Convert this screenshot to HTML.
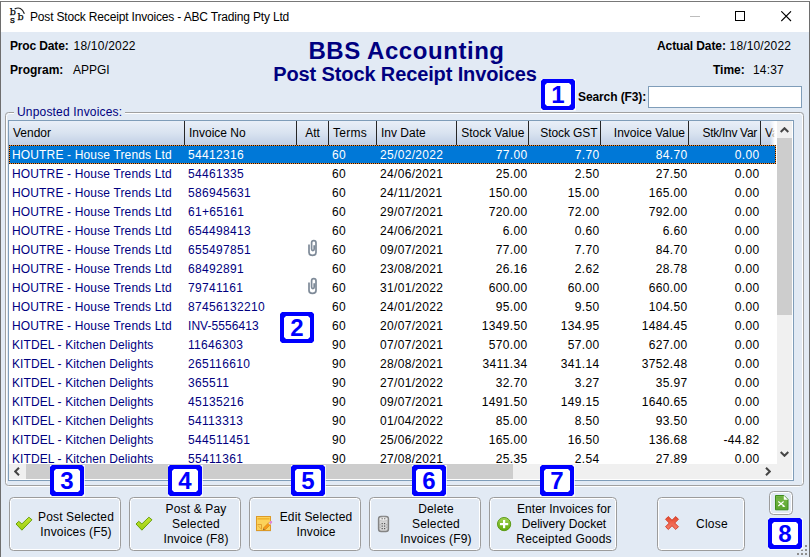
<!DOCTYPE html>
<html><head><meta charset="utf-8"><title>Post Stock Receipt Invoices</title>
<style>
*{box-sizing:border-box;margin:0;padding:0}
html,body{width:810px;height:557px;overflow:hidden}
body{background:#e2eaf4;font-family:"Liberation Sans",sans-serif;font-size:12px;color:#000;position:relative}
.abs{position:absolute}
#top0{position:absolute;left:0;top:0;width:810px;height:1px;background:#fff}
#win{position:absolute;left:0;top:1px;width:810px;height:556px;border-left:1px solid #6e6e6e;border-top:1px solid #787878;border-right:1px solid #6e6e6e}
#title{position:absolute;left:1px;top:2px;width:808px;height:30px;background:#fff}
#title .cap{position:absolute;left:29px;top:7px;font-size:12px;line-height:16px;letter-spacing:-0.17px;color:#000;white-space:nowrap}
.ico text{font-family:"DejaVu Serif",serif;font-weight:normal;fill:#000;stroke:#000;stroke-width:0.25px}
.lbl{position:absolute;font-size:12px;line-height:14px;white-space:nowrap}
.b{font-weight:bold}
#h1{position:absolute;left:1.5px;width:810px;text-align:center;top:37px;font-size:24px;line-height:28px;letter-spacing:0.55px;font-weight:bold;color:#000080}
#h2{position:absolute;left:0;width:810px;text-align:center;top:63px;font-size:20px;line-height:22px;letter-spacing:-0.12px;font-weight:bold;color:#000080}
#search{position:absolute;left:648px;top:86px;width:154px;height:22px;background:#fff;border:1px solid #7f9db9}
#grpw{position:absolute;left:6px;top:113px;width:797px;height:374px;border:1px solid #fff;border-radius:3.5px}
#grp{position:absolute;left:5px;top:112px;width:799px;height:374px;border:1px solid #a0a0a0;border-radius:3.5px}
#grplbl{position:absolute;left:14px;top:105px;letter-spacing:0.18px;padding:0 3px;background:#e2eaf4;color:#000080;font-size:12px;line-height:14px}
#tbl{position:absolute;left:8px;top:120px;width:786px;height:361px;border:1px solid #7f9db9;background:#fff;overflow:hidden}
#hdr{position:absolute;left:0;top:0;width:766px;height:24px;background:linear-gradient(#e9eff8,#d9e3f0 50%,#c1cfe5)}
.th{position:absolute;top:121px;height:24px;padding-top:1px;line-height:23px;font-size:12px;padding-left:4px;border-right:1px solid #262626;white-space:nowrap;overflow:hidden}
.th.r{text-align:right;padding-right:3px;padding-left:0}
.th.c{text-align:center;padding-left:0}
#fade{position:absolute;left:770px;top:121px;width:7px;height:24px;background:linear-gradient(90deg,rgba(255,255,255,0),#fff 70%)}
#rows{position:absolute;left:9px;top:145px;width:767px;height:318px;overflow:hidden}
.row{position:absolute;left:0;width:767px;height:19px;color:#000}
.td.n{color:#000080}
.sel .td.n{color:#fff}
.row.sel{color:#fff;background:repeating-linear-gradient(90deg,#111 0 1px,#ff8c2a 1px 2px) 0 0/100% 1px no-repeat,repeating-linear-gradient(90deg,#111 0 1px,#ff8c2a 1px 2px) 0 100%/100% 1px no-repeat,repeating-linear-gradient(180deg,#111 0 1px,#ff8c2a 1px 2px) 0 0/1px 100% no-repeat,repeating-linear-gradient(180deg,#111 0 1px,#ff8c2a 1px 2px) 100% 0/1px 100% no-repeat,#0078d7}
.td{position:absolute;top:1px;height:18px;line-height:18px;font-size:12px;padding-left:3px;letter-spacing:0.33px;white-space:nowrap;overflow:hidden}
.td.v{letter-spacing:0.15px}
.td.r{text-align:right;padding-right:1.6px;padding-left:0}
.clip{position:absolute}
#vs{position:absolute;left:777px;top:121px;width:15px;height:343px;background:#f0f0f0}
#vthumb{position:absolute;left:0;top:17px;width:15px;height:177px;background:#cdcdcd}
#hs{position:absolute;left:9px;top:464px;width:768px;height:15px;background:#f0f0f0}
#hthumb{position:absolute;left:17px;top:0;width:487px;height:15px;background:#cdcdcd}
#corner{position:absolute;left:777px;top:464px;width:15px;height:15px;background:#f0f0f0}
.btn{position:absolute;top:497px;height:54px;border:1px solid #9c9c9c;border-radius:4.5px;box-shadow:inset 0 0 0 1px #fff;background:#e2eaf4;font-size:12px;line-height:15px;text-align:center}
.btn .t{position:absolute;white-space:nowrap;text-align:center;letter-spacing:0.15px}
.badge{position:absolute}
.badge text{font-family:"Liberation Sans",sans-serif;font-weight:bold;font-size:24px;fill:#0000ff}
</style></head><body>
<div id="top0"></div><div id="win"></div>
<div id="title">
<svg class="abs ico" style="left:7px;top:4px" width="20" height="20" viewBox="0 0 20 20"><text x="1.8" y="9.1" font-size="9.6">b</text><text x="9.4" y="13.7" font-size="9.6">b</text><text x="2" y="16.6" font-size="9.6">s</text><path d="M6.7 2.9 Q13.2 -0.3 16.4 7.8" fill="none" stroke="#222" stroke-width="1.2"/></svg>
<div class="cap">Post Stock Receipt Invoices - ABC Trading Pty Ltd</div>
<svg class="abs" style="left:689px;top:14px" width="12" height="2"><rect width="10" height="1" fill="#bdbdbd"/></svg>
<svg class="abs" style="left:734px;top:9px" width="11" height="11"><rect x="0.5" y="0.5" width="9" height="9" fill="none" stroke="#000" stroke-width="1"/></svg>
<svg class="abs" style="left:780px;top:9px" width="11" height="11"><path d="M0.3 0.3 L10 10 M10 0.3 L0.3 10" stroke="#000" stroke-width="1.1" fill="none"/></svg>
</div>

<div class="lbl b" style="left:10px;top:39px;letter-spacing:-0.15px">Proc Date:</div>
<div class="lbl" style="left:73.5px;top:39px;letter-spacing:0.22px">18/10/2022</div>
<div class="lbl b" style="left:10px;top:63px">Program:</div>
<div class="lbl" style="left:73px;top:63px">APPGI</div>
<div id="h1">BBS Accounting</div>
<div id="h2">Post Stock Receipt Invoices</div>
<div class="lbl b" style="left:657px;top:39px;letter-spacing:-0.1px">Actual Date:</div>
<div class="lbl" style="left:729.6px;top:39px;letter-spacing:0.14px">18/10/2022</div>
<div class="lbl b" style="left:713px;top:63px">Time:</div>
<div class="lbl" style="left:753px;top:63px;letter-spacing:0.15px">14:37</div>
<div class="lbl b" style="left:578px;top:90px;letter-spacing:-0.1px">Search (F3):</div>
<div id="search"></div>

<div id="grpw"></div><div id="grp"></div>
<div id="grplbl">Unposted Invoices:</div>
<div id="tbl"><div id="hdr"></div></div>
<div class="th" style="left:9px;width:176px;"><span>Vendor</span></div>
<div class="th" style="left:185px;width:112px;"><span>Invoice No</span></div>
<div class="th c" style="left:297px;width:32px;"><span>Att</span></div>
<div class="th" style="left:329px;width:48px;letter-spacing:0.3px;"><span>Terms</span></div>
<div class="th" style="left:377px;width:80px;"><span>Inv Date</span></div>
<div class="th r" style="left:457px;width:72px;padding-right:3.6px;"><span>Stock Value</span></div>
<div class="th r" style="left:529px;width:72px;letter-spacing:-0.08px;padding-right:2.5px;"><span>Stock GST</span></div>
<div class="th r" style="left:601px;width:88px;"><span>Invoice Value</span></div>
<div class="th r" style="left:689px;width:72px;letter-spacing:-0.3px;"><span>Stk/Inv Var</span></div>
<div class="th" style="left:761px;width:14px;border-right:0;width:16px;"><span>Va</span></div>
<div id="fade"></div>
<div id="rows">
<div class="row sel" style="top:0px"><span class="td v n" style="left:0px;width:176px">HOUTRE - House Trends Ltd</span><span class="td n" style="left:176px;width:112px">54412316</span><span class="td" style="left:320px;width:48px">60</span><span class="td" style="left:368px;width:80px">25/02/2022</span><span class="td r" style="left:448px;width:72px">77.00</span><span class="td r" style="left:520px;width:72px">7.70</span><span class="td r" style="left:592px;width:88px">84.70</span><span class="td r" style="left:680px;width:72px">0.00</span></div>
<div class="row" style="top:19px"><span class="td v n" style="left:0px;width:176px">HOUTRE - House Trends Ltd</span><span class="td n" style="left:176px;width:112px">54461335</span><span class="td" style="left:320px;width:48px">60</span><span class="td" style="left:368px;width:80px">24/06/2021</span><span class="td r" style="left:448px;width:72px">25.00</span><span class="td r" style="left:520px;width:72px">2.50</span><span class="td r" style="left:592px;width:88px">27.50</span><span class="td r" style="left:680px;width:72px">0.00</span></div>
<div class="row" style="top:38px"><span class="td v n" style="left:0px;width:176px">HOUTRE - House Trends Ltd</span><span class="td n" style="left:176px;width:112px">586945631</span><span class="td" style="left:320px;width:48px">60</span><span class="td" style="left:368px;width:80px">24/11/2021</span><span class="td r" style="left:448px;width:72px">150.00</span><span class="td r" style="left:520px;width:72px">15.00</span><span class="td r" style="left:592px;width:88px">165.00</span><span class="td r" style="left:680px;width:72px">0.00</span></div>
<div class="row" style="top:57px"><span class="td v n" style="left:0px;width:176px">HOUTRE - House Trends Ltd</span><span class="td n" style="left:176px;width:112px">61+65161</span><span class="td" style="left:320px;width:48px">60</span><span class="td" style="left:368px;width:80px">29/07/2021</span><span class="td r" style="left:448px;width:72px">720.00</span><span class="td r" style="left:520px;width:72px">72.00</span><span class="td r" style="left:592px;width:88px">792.00</span><span class="td r" style="left:680px;width:72px">0.00</span></div>
<div class="row" style="top:76px"><span class="td v n" style="left:0px;width:176px">HOUTRE - House Trends Ltd</span><span class="td n" style="left:176px;width:112px">654498413</span><span class="td" style="left:320px;width:48px">60</span><span class="td" style="left:368px;width:80px">24/06/2021</span><span class="td r" style="left:448px;width:72px">6.00</span><span class="td r" style="left:520px;width:72px">0.60</span><span class="td r" style="left:592px;width:88px">6.60</span><span class="td r" style="left:680px;width:72px">0.00</span></div>
<div class="row" style="top:95px"><span class="td v n" style="left:0px;width:176px">HOUTRE - House Trends Ltd</span><span class="td n" style="left:176px;width:112px">655497851</span><svg class="clip" style="left:298px;top:-1px" width="11" height="18" viewBox="0 0 11 18"><path d="M2 5.5 V13.5 Q2 16.4 5.5 16.4 Q9 16.4 9 13.5 V3.8 Q9 1.6 6.8 1.6 Q4.6 1.6 4.6 3.8 V10 Q4.6 11.6 5.9 11.6 Q7.2 11.6 7.2 10 V6.2" fill="none" stroke="#7e8a98" stroke-width="1.7"/></svg><span class="td" style="left:320px;width:48px">60</span><span class="td" style="left:368px;width:80px">09/07/2021</span><span class="td r" style="left:448px;width:72px">77.00</span><span class="td r" style="left:520px;width:72px">7.70</span><span class="td r" style="left:592px;width:88px">84.70</span><span class="td r" style="left:680px;width:72px">0.00</span></div>
<div class="row" style="top:114px"><span class="td v n" style="left:0px;width:176px">HOUTRE - House Trends Ltd</span><span class="td n" style="left:176px;width:112px">68492891</span><span class="td" style="left:320px;width:48px">60</span><span class="td" style="left:368px;width:80px">23/08/2021</span><span class="td r" style="left:448px;width:72px">26.16</span><span class="td r" style="left:520px;width:72px">2.62</span><span class="td r" style="left:592px;width:88px">28.78</span><span class="td r" style="left:680px;width:72px">0.00</span></div>
<div class="row" style="top:133px"><span class="td v n" style="left:0px;width:176px">HOUTRE - House Trends Ltd</span><span class="td n" style="left:176px;width:112px">79741161</span><svg class="clip" style="left:298px;top:-1px" width="11" height="18" viewBox="0 0 11 18"><path d="M2 5.5 V13.5 Q2 16.4 5.5 16.4 Q9 16.4 9 13.5 V3.8 Q9 1.6 6.8 1.6 Q4.6 1.6 4.6 3.8 V10 Q4.6 11.6 5.9 11.6 Q7.2 11.6 7.2 10 V6.2" fill="none" stroke="#7e8a98" stroke-width="1.7"/></svg><span class="td" style="left:320px;width:48px">60</span><span class="td" style="left:368px;width:80px">31/01/2022</span><span class="td r" style="left:448px;width:72px">600.00</span><span class="td r" style="left:520px;width:72px">60.00</span><span class="td r" style="left:592px;width:88px">660.00</span><span class="td r" style="left:680px;width:72px">0.00</span></div>
<div class="row" style="top:152px"><span class="td v n" style="left:0px;width:176px">HOUTRE - House Trends Ltd</span><span class="td n" style="left:176px;width:112px">87456132210</span><span class="td" style="left:320px;width:48px">60</span><span class="td" style="left:368px;width:80px">24/01/2022</span><span class="td r" style="left:448px;width:72px">95.00</span><span class="td r" style="left:520px;width:72px">9.50</span><span class="td r" style="left:592px;width:88px">104.50</span><span class="td r" style="left:680px;width:72px">0.00</span></div>
<div class="row" style="top:171px"><span class="td v n" style="left:0px;width:176px">HOUTRE - House Trends Ltd</span><span class="td n" style="left:176px;width:112px;letter-spacing:0.05px">INV-5556413</span><span class="td" style="left:320px;width:48px">60</span><span class="td" style="left:368px;width:80px">20/07/2021</span><span class="td r" style="left:448px;width:72px">1349.50</span><span class="td r" style="left:520px;width:72px">134.95</span><span class="td r" style="left:592px;width:88px">1484.45</span><span class="td r" style="left:680px;width:72px">0.00</span></div>
<div class="row" style="top:190px"><span class="td v n" style="left:0px;width:176px;letter-spacing:0.1px">KITDEL - Kitchen Delights</span><span class="td n" style="left:176px;width:112px">11646303</span><span class="td" style="left:320px;width:48px">90</span><span class="td" style="left:368px;width:80px">07/07/2021</span><span class="td r" style="left:448px;width:72px">570.00</span><span class="td r" style="left:520px;width:72px">57.00</span><span class="td r" style="left:592px;width:88px">627.00</span><span class="td r" style="left:680px;width:72px">0.00</span></div>
<div class="row" style="top:209px"><span class="td v n" style="left:0px;width:176px;letter-spacing:0.1px">KITDEL - Kitchen Delights</span><span class="td n" style="left:176px;width:112px">265116610</span><span class="td" style="left:320px;width:48px">90</span><span class="td" style="left:368px;width:80px">28/08/2021</span><span class="td r" style="left:448px;width:72px">3411.34</span><span class="td r" style="left:520px;width:72px">341.14</span><span class="td r" style="left:592px;width:88px">3752.48</span><span class="td r" style="left:680px;width:72px">0.00</span></div>
<div class="row" style="top:228px"><span class="td v n" style="left:0px;width:176px;letter-spacing:0.1px">KITDEL - Kitchen Delights</span><span class="td n" style="left:176px;width:112px">365511</span><span class="td" style="left:320px;width:48px">90</span><span class="td" style="left:368px;width:80px">27/01/2022</span><span class="td r" style="left:448px;width:72px">32.70</span><span class="td r" style="left:520px;width:72px">3.27</span><span class="td r" style="left:592px;width:88px">35.97</span><span class="td r" style="left:680px;width:72px">0.00</span></div>
<div class="row" style="top:247px"><span class="td v n" style="left:0px;width:176px;letter-spacing:0.1px">KITDEL - Kitchen Delights</span><span class="td n" style="left:176px;width:112px">45135216</span><span class="td" style="left:320px;width:48px">90</span><span class="td" style="left:368px;width:80px">09/07/2021</span><span class="td r" style="left:448px;width:72px">1491.50</span><span class="td r" style="left:520px;width:72px">149.15</span><span class="td r" style="left:592px;width:88px">1640.65</span><span class="td r" style="left:680px;width:72px">0.00</span></div>
<div class="row" style="top:266px"><span class="td v n" style="left:0px;width:176px;letter-spacing:0.1px">KITDEL - Kitchen Delights</span><span class="td n" style="left:176px;width:112px">54113313</span><span class="td" style="left:320px;width:48px">90</span><span class="td" style="left:368px;width:80px">01/04/2022</span><span class="td r" style="left:448px;width:72px">85.00</span><span class="td r" style="left:520px;width:72px">8.50</span><span class="td r" style="left:592px;width:88px">93.50</span><span class="td r" style="left:680px;width:72px">0.00</span></div>
<div class="row" style="top:285px"><span class="td v n" style="left:0px;width:176px;letter-spacing:0.1px">KITDEL - Kitchen Delights</span><span class="td n" style="left:176px;width:112px">544511451</span><span class="td" style="left:320px;width:48px">90</span><span class="td" style="left:368px;width:80px">25/06/2022</span><span class="td r" style="left:448px;width:72px">165.00</span><span class="td r" style="left:520px;width:72px">16.50</span><span class="td r" style="left:592px;width:88px">136.68</span><span class="td r" style="left:680px;width:72px">-44.82</span></div>
<div class="row" style="top:304px"><span class="td v n" style="left:0px;width:176px;letter-spacing:0.1px">KITDEL - Kitchen Delights</span><span class="td n" style="left:176px;width:112px">55411361</span><span class="td" style="left:320px;width:48px">90</span><span class="td" style="left:368px;width:80px">27/08/2021</span><span class="td r" style="left:448px;width:72px">25.35</span><span class="td r" style="left:520px;width:72px">2.54</span><span class="td r" style="left:592px;width:88px">27.89</span><span class="td r" style="left:680px;width:72px">0.00</span></div>
</div>
<div id="vs"><div id="vthumb"></div>
<svg class="abs" style="left:3px;top:6px" width="9" height="6"><path d="M0.7 5 L4.5 1.2 L8.3 5" fill="none" stroke="#454545" stroke-width="2"/></svg>
<svg class="abs" style="left:3px;top:330px" width="9" height="6"><path d="M0.7 1 L4.5 4.8 L8.3 1" fill="none" stroke="#454545" stroke-width="2"/></svg>
</div>
<div id="hs"><div id="hthumb"></div>
<svg class="abs" style="left:5px;top:3px" width="6" height="9"><path d="M5 0.7 L1.2 4.5 L5 8.3" fill="none" stroke="#454545" stroke-width="2"/></svg>
<svg class="abs" style="left:756px;top:3px" width="6" height="9"><path d="M1 0.7 L4.8 4.5 L1 8.3" fill="none" stroke="#454545" stroke-width="2"/></svg>
</div>
<div id="corner"></div>

<div class="btn" style="left:9px;width:112px;top:497px;height:54px"><svg class="abs" style="left:4.4px;top:17px" width="20" height="18" viewBox="0 0 20 18"><defs><linearGradient id="tg1" x1="0" y1="0" x2="0" y2="1"><stop offset="0" stop-color="#c4e630"/><stop offset="1" stop-color="#98cc10"/></linearGradient></defs><path d="M2 9 L4.7 6.3 L7.9 8.9 L14.9 2.2 L18 4.8 L7.9 15.2 Z" fill="url(#tg1)" stroke="#5e9a00" stroke-width="0.9" stroke-linejoin="round"/></svg><div class="t" style="left:23px;width:86px;top:12px">Post Selected<br>Invoices (F5)</div></div>
<div class="btn" style="left:129px;width:112px;top:497px;height:54px"><svg class="abs" style="left:4.4px;top:17px" width="20" height="18" viewBox="0 0 20 18"><defs><linearGradient id="tg2" x1="0" y1="0" x2="0" y2="1"><stop offset="0" stop-color="#c4e630"/><stop offset="1" stop-color="#98cc10"/></linearGradient></defs><path d="M2 9 L4.7 6.3 L7.9 8.9 L14.9 2.2 L18 4.8 L7.9 15.2 Z" fill="url(#tg2)" stroke="#5e9a00" stroke-width="0.9" stroke-linejoin="round"/></svg><div class="t" style="left:23px;width:86px;top:4px">Post &amp; Pay<br>Selected<br>Invoice (F8)</div></div>
<div class="btn" style="left:249px;width:112px;top:497px;height:54px"><svg class="abs" style="left:5px;top:17px" width="18" height="18" viewBox="0 0 18 18"><rect x="1" y="15" width="15" height="1.2" fill="#9a9a9a" opacity=".7"/><rect x="1.5" y="1.5" width="14" height="14" fill="#fbd25a" stroke="#dc9a28" stroke-width="1"/><rect x="2.5" y="3" width="12" height="1.6" fill="#f2b42c"/><path d="M2.5 9.5 H6.5 V14.5" fill="none" stroke="#e0a030" stroke-width="1"/><path d="M3 10.5 L6 14" stroke="#e8b040" stroke-width="1"/><path d="M8.2 15 L8.8 12.6 L14.2 7.2 L16 9 L10.6 14.4 Z" fill="#f59a1a" stroke="#c87810" stroke-width=".5"/><path d="M8.2 15 L8.6 13.4 L9.8 14.6 Z" fill="#555"/><path d="M13.3 8.1 L15.1 9.9 L16 9 L14.2 7.2 Z" fill="#d8d8e8"/><path d="M14.2 7.2 L15.4 6 Q16.3 5.6 16.9 6.3 Q17.5 7 17.1 7.8 L16 9 Z" fill="#e088d8"/></svg><div class="t" style="left:23px;width:86px;top:12px">Edit Selected<br>Invoice</div></div>
<div class="btn" style="left:369px;width:112px;top:497px;height:54px"><svg class="abs" style="left:7px;top:17px" width="14" height="18" viewBox="0 0 14 18"><rect x="1.6" y="1.6" width="9.8" height="14.8" rx="2.5" fill="#d6d6d6" stroke="#848484" stroke-width="1.5"/><ellipse cx="6.5" cy="4" rx="4.2" ry="2" fill="#efefef" stroke="#b0b0b0" stroke-width=".6"/><g fill="#555"><rect x="4.6" y="3.2" width="1.1" height="1.1"/><rect x="7.2" y="3.2" width="1.1" height="1.1"/><rect x="4.6" y="8" width="1.2" height="1.2"/><rect x="7" y="8" width="1.2" height="1.2"/><rect x="4.6" y="10.5" width="1.2" height="1.2"/><rect x="7" y="10.5" width="1.2" height="1.2"/><rect x="4.6" y="13" width="1.2" height="1.2"/><rect x="7" y="13" width="1.2" height="1.2"/></g><g fill="#9a9a9a"><rect x="2.6" y="9.3" width="1" height="1"/><rect x="9.2" y="9.3" width="1" height="1"/><rect x="2.6" y="11.8" width="1" height="1"/><rect x="9.2" y="11.8" width="1" height="1"/></g></svg><div class="t" style="left:23px;width:86px;top:4px">Delete<br>Selected<br>Invoices (F9)</div></div>
<div class="btn" style="left:489px;width:128px;top:497px;height:54px"><svg class="abs" style="left:6px;top:18px" width="16" height="16" viewBox="0 0 16 16"><defs><linearGradient id="pg" x1="0" y1="0" x2="0" y2="1"><stop offset="0" stop-color="#a6d456"/><stop offset="1" stop-color="#5ea808"/></linearGradient></defs><circle cx="8.1" cy="8.1" r="6.6" fill="url(#pg)" stroke="#5a9a14" stroke-width="1"/><rect x="4" y="7" width="8.2" height="2.2" fill="#fff"/><rect x="7" y="4" width="2.2" height="8.2" fill="#fff"/></svg><div class="t" style="left:20px;width:108px;top:4px;letter-spacing:0.03px">Enter Invoices for<br>Delivery Docket<br><span style="letter-spacing:0.18px">Receipted Goods</span></div></div>
<div class="btn" style="left:657px;width:88px;top:497px;height:54px"><svg class="abs" style="left:6px;top:17px" width="18" height="18" viewBox="0 0 18 18"><defs><linearGradient id="rg" x1="0" y1="0" x2="0" y2="1"><stop offset="0" stop-color="#e2462a"/><stop offset="0.5" stop-color="#f0644e"/><stop offset="1" stop-color="#f47e6a"/></linearGradient></defs><path d="M11.75 1.57 L14.43 4.25 L10.69 8.00 L14.43 11.75 L11.75 14.43 L8.00 10.69 L4.25 14.43 L1.57 11.75 L5.31 8.00 L1.57 4.25 L4.25 1.57 L8.00 5.31 Z" fill="url(#rg)" stroke="#d4402a" stroke-width="1" stroke-linejoin="round"/></svg><div class="t" style="left:29px;width:50px;top:19px;letter-spacing:0.25px">Close</div></div>
<div class="btn" style="left:769px;top:491px;width:24px;height:24px"><svg class="abs" style="left:4px;top:2px" width="16" height="18" viewBox="0 0 16 18"><defs><linearGradient id="xg" x1="0" y1="0" x2="0" y2="1"><stop offset="0" stop-color="#7cbc4c"/><stop offset="1" stop-color="#5aa42c"/></linearGradient></defs><path d="M1.5 1.5 H10 L14 5.5 V15.8 H1.5 Z" fill="url(#xg)" stroke="#3e8c1e" stroke-width="1"/><path d="M9.8 1.6 V5.7 H13.9 Z" fill="#fff"/><path d="M4.3 7.5 L9.8 12 M9.6 7.5 L4.3 12" stroke="#fff" stroke-width="1.1"/><path d="M9.4 10.4 L11.4 12.8 L8.4 13 Z" fill="#fff"/><rect x="2.6" y="2.8" width="6" height="1.6" fill="#6aac3c"/></svg></div>

<svg class="abs" style="left:796px;top:544px" width="12" height="12" viewBox="0 0 12 12"><g fill="#8e8e8e"><rect x="9" y="1" width="2" height="2"/><rect x="9" y="5" width="2" height="2"/><rect x="9" y="9" width="2" height="2"/><rect x="5" y="5" width="2" height="2"/><rect x="5" y="9" width="2" height="2"/><rect x="1" y="9" width="2" height="2"/></g></svg>
<svg class="badge" style="left:541px;top:79px" width="35" height="32" viewBox="0 0 35 32"><rect width="34.7" height="31.7" fill="#fff"/><path fill-rule="evenodd" fill="#0000ff" d="M2 0H32L34 2V29L32 31H2L0 29V2Z M6 4H28L30 6V25L28 27H6L4 25V6Z"/><text x="17" y="24" text-anchor="middle">1</text></svg>
<svg class="badge" style="left:280px;top:312px" width="35" height="32" viewBox="0 0 35 32"><rect width="34.7" height="31.7" fill="#fff"/><path fill-rule="evenodd" fill="#0000ff" d="M2 0H32L34 2V29L32 31H2L0 29V2Z M6 4H28L30 6V25L28 27H6L4 25V6Z"/><text x="17" y="24" text-anchor="middle">2</text></svg>
<svg class="badge" style="left:50px;top:465px" width="35" height="32" viewBox="0 0 35 32"><rect width="34.7" height="31.7" fill="#fff"/><path fill-rule="evenodd" fill="#0000ff" d="M2 0H32L34 2V29L32 31H2L0 29V2Z M6 4H28L30 6V25L28 27H6L4 25V6Z"/><text x="17" y="24" text-anchor="middle">3</text></svg>
<svg class="badge" style="left:168px;top:465px" width="35" height="32" viewBox="0 0 35 32"><rect width="34.7" height="31.7" fill="#fff"/><path fill-rule="evenodd" fill="#0000ff" d="M2 0H32L34 2V29L32 31H2L0 29V2Z M6 4H28L30 6V25L28 27H6L4 25V6Z"/><text x="17" y="24" text-anchor="middle">4</text></svg>
<svg class="badge" style="left:291px;top:465px" width="35" height="32" viewBox="0 0 35 32"><rect width="34.7" height="31.7" fill="#fff"/><path fill-rule="evenodd" fill="#0000ff" d="M2 0H32L34 2V29L32 31H2L0 29V2Z M6 4H28L30 6V25L28 27H6L4 25V6Z"/><text x="17" y="24" text-anchor="middle">5</text></svg>
<svg class="badge" style="left:412px;top:465px" width="35" height="32" viewBox="0 0 35 32"><rect width="34.7" height="31.7" fill="#fff"/><path fill-rule="evenodd" fill="#0000ff" d="M2 0H32L34 2V29L32 31H2L0 29V2Z M6 4H28L30 6V25L28 27H6L4 25V6Z"/><text x="17" y="24" text-anchor="middle">6</text></svg>
<svg class="badge" style="left:540px;top:465px" width="35" height="32" viewBox="0 0 35 32"><rect width="34.7" height="31.7" fill="#fff"/><path fill-rule="evenodd" fill="#0000ff" d="M2 0H32L34 2V29L32 31H2L0 29V2Z M6 4H28L30 6V25L28 27H6L4 25V6Z"/><text x="17" y="24" text-anchor="middle">7</text></svg>
<svg class="badge" style="left:768px;top:518px" width="35" height="32" viewBox="0 0 35 32"><rect width="34.7" height="31.7" fill="#fff"/><path fill-rule="evenodd" fill="#0000ff" d="M2 0H32L34 2V29L32 31H2L0 29V2Z M6 4H28L30 6V25L28 27H6L4 25V6Z"/><text x="17" y="24" text-anchor="middle">8</text></svg>
</body></html>
